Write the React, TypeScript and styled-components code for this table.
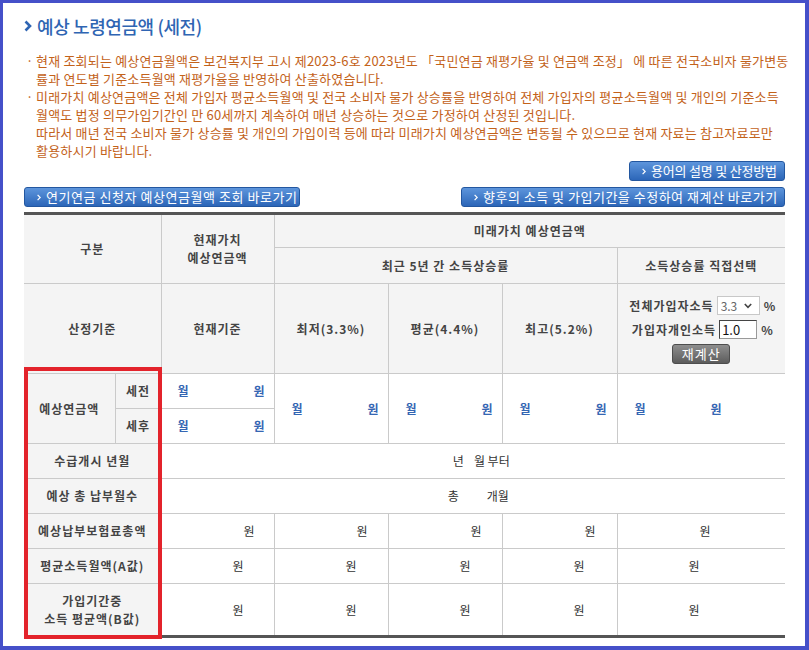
import React from 'react';
import styled, { createGlobalStyle } from 'styled-components';

const GlobalStyle = createGlobalStyle`
  html, body { margin: 0; padding: 0; background: #fff; }
  body { font-family: "Noto Sans CJK KR", "Noto Sans", sans-serif; }
  * { box-sizing: border-box; }
`;

const Frame = styled.div`
  width: 809px;
  height: 650px;
  border-style: solid;
  border-color: #4550c9;
  border-width: 3px 4px 4px 3px;
  padding: 12px 20px 0 21px;
  background: #fff;
  overflow: hidden;
`;

const Title = styled.h2`
  margin: 0;
  display: flex;
  align-items: center;
  gap: 5px;
  height: 22px;
  font-size: 18px;
  line-height: 22px;
  font-weight: 500;
  color: #2f65b3;
  letter-spacing: -0.4px;
`;

const Notes = styled.ul`
  list-style: none;
  margin: 15px 0 0;
  padding: 0;
  color: #c3621a;
  font-size: 13px;
  line-height: 18px;
  letter-spacing: 0.2px;
`;

const Note = styled.li`
  display: flex;
  white-space: nowrap;
`;

const Bullet = styled.span`
  flex: 0 0 12px;
  padding-left: 2px;
`;

const NoteText = styled.span`
  display: block;
`;

const TopButtons = styled.div`
  display: flex;
  justify-content: flex-end;
  margin-top: 1px;
`;

const ButtonRow = styled.div`
  display: flex;
  justify-content: space-between;
  margin-top: 6px;
`;

const LinkButton = styled.a<{ $width: number; $spacing: number }>`
  display: inline-flex;
  align-items: center;
  gap: 5px;
  width: ${(p) => p.$width}px;
  height: 20px;
  padding: 0 0 0 12px;
  border: 1px solid #2357a0;
  border-radius: 3px;
  background: linear-gradient(#5d95dc, #2c66b8);
  color: #fff;
  font-size: 13px;
  line-height: 18px;
  text-decoration: none;
  letter-spacing: ${(p) => p.$spacing}px;
  white-space: nowrap;
  cursor: pointer;
`;

const TableWrap = styled.div`
  position: relative;
  margin-top: 5px;
`;

const Table = styled.table`
  width: 761px;
  border-collapse: collapse;
  table-layout: fixed;
  border-top: 3px solid #555;
  border-bottom: 3px solid #555;
  border-left: hidden;
  border-right: hidden;
  font-size: 12px;
`;

const Row = styled.tr<{ $h: number }>`
  height: ${(p) => p.$h}px;
`;

const Th = styled.th`
  padding: 0;
  background: #f4f4f4;
  border: 1px solid #cacaca;
  color: #444;
  font-weight: 700;
  letter-spacing: 1px;
  line-height: 18px;
  text-align: center;
  vertical-align: middle;
`;

const Td = styled.td<{ $indent?: number; $center?: boolean }>`
  padding: 0 0 0 ${(p) => p.$indent ?? 0}px;
  background: #fff;
  border: 1px solid #cacaca;
  color: #333;
  font-weight: 400;
  line-height: 18px;
  text-align: ${(p) => (p.$center ? 'center' : 'left')};
  vertical-align: middle;
  white-space: nowrap;
`;

const MonthValue = styled.span`
  display: inline-flex;
  justify-content: space-between;
  width: 87px;
  color: #3566b3;
  font-weight: 700;
`;

const Blank = styled.span<{ $w: number }>`
  display: inline-block;
  width: ${(p) => p.$w}px;
`;

const Highlight = styled.div`
  position: absolute;
  left: 0;
  top: 155px;
  width: 138px;
  height: 272px;
  border: 4px solid #e3232b;
  pointer-events: none;
`;

const ControlLine = styled.div`
  display: flex;
  align-items: center;
  justify-content: center;
  gap: 3px;
  height: 24px;
  padding-left: 2px;
`;

const SelectBox = styled.span`
  position: relative;
  display: inline-flex;
  width: 43px;
  height: 19px;
`;

const Select = styled.select`
  appearance: none;
  width: 100%;
  height: 100%;
  margin: 0;
  padding: 0 0 0 3px;
  border: 1px solid #c8c8c8;
  border-radius: 0;
  background: #fff;
  color: #666;
  font-family: inherit;
  font-size: 12px;
  letter-spacing: 0;
  outline: none;
`;

const SelectArrow = styled.svg`
  position: absolute;
  right: 8px;
  top: 7px;
  pointer-events: none;
`;

const NumInput = styled.input`
  width: 38px;
  height: 19px;
  margin: 0;
  padding: 0 0 0 2px;
  border: 1px solid #999;
  border-top-color: #444;
  border-left-color: #444;
  background: #fff;
  color: #111;
  font-family: inherit;
  font-size: 13px;
  letter-spacing: 0;
  outline: none;
`;

const Percent = styled.span`
  letter-spacing: 0;
  margin-left: 1px;
`;

const RecalcButton = styled.button`
  display: block;
  margin: 2px auto 0;
  width: 58px;
  height: 20px;
  padding: 0;
  border: 1px solid #4d4d4d;
  border-radius: 3px;
  background: linear-gradient(#8e8e8e, #5c5c5c);
  color: #fff;
  font-family: inherit;
  font-size: 13px;
  font-weight: 400;
  letter-spacing: 1px;
  line-height: 18px;
  cursor: pointer;
`;

const Chevron = () => (
  <svg width="8" height="12" viewBox="0 0 8 12" aria-hidden>
    <path d="M1.5 1.5 L6 6 L1.5 10.5" fill="none" stroke="#2f65b3" strokeWidth="2.6" />
  </svg>
);

const SmallArrow = () => (
  <svg width="4" height="7" viewBox="0 0 4 7" aria-hidden>
    <path d="M0.6 0.8 L3.2 3.5 L0.6 6.2" fill="none" stroke="#fff" strokeWidth="1.2" />
  </svg>
);

const notes = [
  [
    '현재 조회되는 예상연금월액은 보건복지부 고시 제2023-6호 2023년도 「국민연금 재평가율 및 연금액 조정」 에 따른 전국소비자 물가변동',
    '률과 연도별 기준소득월액 재평가율을 반영하여 산출하였습니다.',
  ],
  [
    '미래가치 예상연금액은 전체 가입자 평균소득월액 및 전국 소비자 물가 상승률을 반영하여 전체 가입자의 평균소득월액 및 개인의 기준소득',
    '월액도 법정 의무가입기간인 만 60세까지 계속하여 매년 상승하는 것으로 가정하여 산정된 것입니다.',
    '따라서 매년 전국 소비자 물가 상승률 및 개인의 가입이력 등에 따라 미래가치 예상연금액은 변동될 수 있으므로 현재 자료는 참고자료로만',
    '활용하시기 바랍니다.',
  ],
];

const amountRows: { label: React.ReactNode; indent: number; h: number }[] = [
  { label: '예상납부보험료총액', indent: 82, h: 35 },
  { label: '평균소득월액(A값)', indent: 71, h: 35 },
  {
    label: (
      <>
        가입기간중
        <br />
        소득 평균액(B값)
      </>
    ),
    indent: 71,
    h: 53,
  },
];

const Month = () => (
  <MonthValue>
    <span>월</span>
    <span>원</span>
  </MonthValue>
);

export default function App() {
  return (
    <>
      <GlobalStyle />
      <Frame>
        <Title>
          <Chevron />
          예상 노령연금액 (세전)
        </Title>

        <Notes>
          {notes.map((lines, i) => (
            <Note key={i}>
              <Bullet>·</Bullet>
              <div>
                {lines.map((l, j) => (
                  <NoteText key={j}>{l}</NoteText>
                ))}
              </div>
            </Note>
          ))}
        </Notes>

        <TopButtons>
          <LinkButton $width={156} $spacing={-0.2}>
            <SmallArrow />
            용어의 설명 및 산정방법
          </LinkButton>
        </TopButtons>
        <ButtonRow>
          <LinkButton $width={276} $spacing={0.55}>
            <SmallArrow />
            연기연금 신청자 예상연금월액 조회 바로가기
          </LinkButton>
          <LinkButton $width={324} $spacing={0.5}>
            <SmallArrow />
            향후의 소득 및 가입기간을 수정하여 재계산 바로가기
          </LinkButton>
        </ButtonRow>

        <TableWrap>
          <Table>
            <colgroup>
              <col style={{ width: 91 }} />
              <col style={{ width: 46 }} />
              <col style={{ width: 113 }} />
              <col style={{ width: 114 }} />
              <col style={{ width: 114 }} />
              <col style={{ width: 115 }} />
              <col style={{ width: 168 }} />
            </colgroup>
            <thead>
              <Row $h={34}>
                <Th rowSpan={2} colSpan={2}>구분</Th>
                <Th rowSpan={2}>
                  현재가치
                  <br />
                  예상연금액
                </Th>
                <Th colSpan={4}>미래가치 예상연금액</Th>
              </Row>
              <Row $h={36}>
                <Th colSpan={3}>최근 5년 간 소득상승률</Th>
                <Th>소득상승률 직접선택</Th>
              </Row>
              <Row $h={90}>
                <Th colSpan={2}>산정기준</Th>
                <Th>현재기준</Th>
                <Th>최저(3.3%)</Th>
                <Th>평균(4.4%)</Th>
                <Th>최고(5.2%)</Th>
                <Th>
                  <ControlLine>
                    전체가입자소득
                    <SelectBox>
                      <Select defaultValue="3.3" aria-label="전체가입자소득">
                        <option>3.3</option>
                        <option>4.4</option>
                        <option>5.2</option>
                      </Select>
                      <SelectArrow width="8" height="6" viewBox="0 0 8 6">
                        <path d="M0.8 1 L4 4.3 L7.2 1" fill="none" stroke="#444" strokeWidth="1.6" />
                      </SelectArrow>
                    </SelectBox>
                    <Percent>%</Percent>
                  </ControlLine>
                  <ControlLine>
                    가입자개인소득
                    <NumInput defaultValue="1.0" aria-label="가입자개인소득" />
                    <Percent>%</Percent>
                  </ControlLine>
                  <RecalcButton type="button">재계산</RecalcButton>
                </Th>
              </Row>
            </thead>
            <tbody>
              <Row $h={35}>
                <Th rowSpan={2}>예상연금액</Th>
                <Th>세전</Th>
                <Td $indent={16}>
                  <Month />
                </Td>
                {[0, 1, 2, 3].map((k) => (
                  <Td key={k} rowSpan={2} $indent={17}>
                    <Month />
                  </Td>
                ))}
              </Row>
              <Row $h={35}>
                <Th>세후</Th>
                <Td $indent={16}>
                  <Month />
                </Td>
              </Row>
              <Row $h={35}>
                <Th colSpan={2}>수급개시 년월</Th>
                <Td colSpan={5} $center $indent={16}>
                  년<Blank $w={10} />월 부터
                </Td>
              </Row>
              <Row $h={35}>
                <Th colSpan={2}>예상 총 납부월수</Th>
                <Td colSpan={5} $center $indent={10}>
                  총<Blank $w={28} />개월
                </Td>
              </Row>
              {amountRows.map((r, i) => (
                <Row key={i} $h={r.h}>
                  <Th colSpan={2}>{r.label}</Th>
                  {[0, 1, 2, 3, 4].map((k) => (
                    <Td key={k} $indent={r.indent}>
                      원
                    </Td>
                  ))}
                </Row>
              ))}
            </tbody>
          </Table>
          <Highlight />
        </TableWrap>
      </Frame>
    </>
  );
}
